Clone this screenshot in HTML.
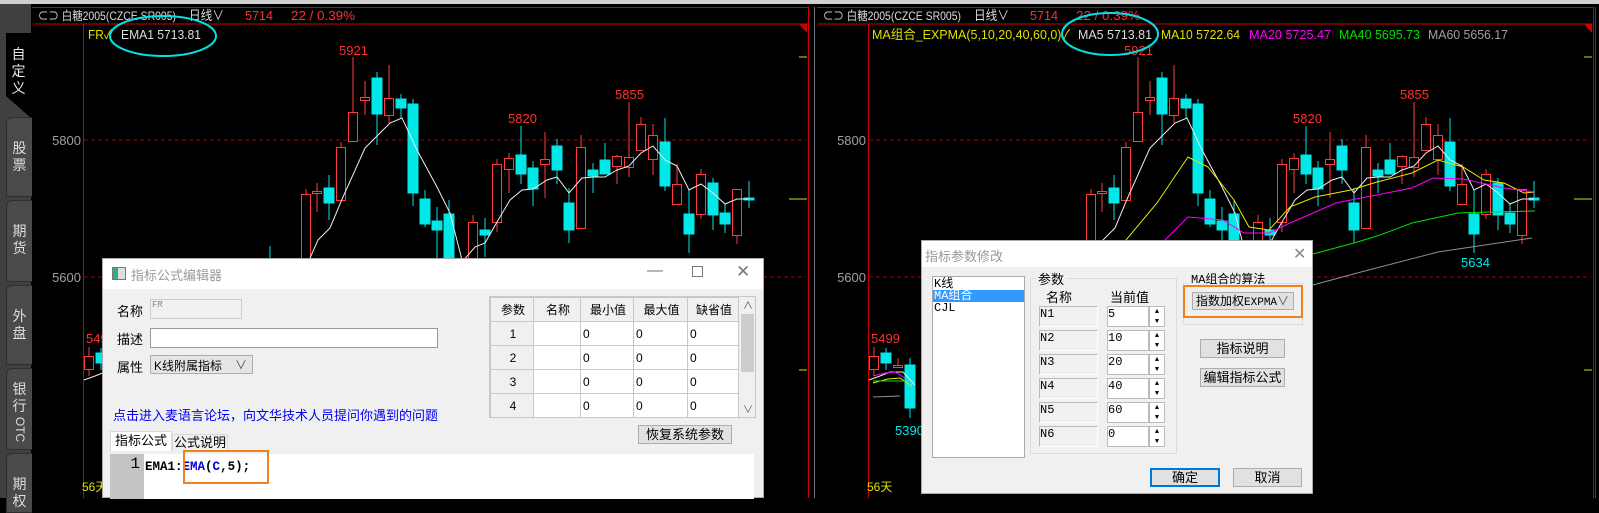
<!DOCTYPE html>
<html><head><meta charset="utf-8">
<style>
*{margin:0;padding:0;box-sizing:border-box}
body{width:1599px;height:498px;background:#000;position:relative;overflow:hidden;font-family:"Liberation Sans","Noto Sans CJK SC",sans-serif}
.a{position:absolute}
.tab{position:absolute;left:6px;width:26px;background:#4a4a4a;border:1px solid #2e2e2e;border-right:none;border-radius:6px 0 0 0;color:#ddd;font-size:14px;line-height:17px;text-align:center;padding-top:22px}
.dlg{position:absolute;background:#f0f0f0;font-size:13px;color:#000}
.inp{position:absolute;border:1px solid #999;background:#fff}
.btn{position:absolute;background:#e1e1e1;border:1px solid #adadad;text-align:center;font-size:13px;line-height:17px}
table{border-collapse:collapse}
td{border:1px solid #c8c8c8;height:24px;font-size:12px;padding-left:2px}
.mono{font-family:"Liberation Mono","Noto Sans CJK SC",monospace}
</style></head><body>
<div class="a" style="left:0;top:0;width:1599px;height:4px;background:#d0d0d0"></div>
<div class="a" style="left:0;top:4px;width:31px;height:494px;background:#404040"></div>
<div class="tab" style="top:117px;height:80px">股<br>票</div>
<div class="tab" style="top:200px;height:82px">期<br>货</div>
<div class="tab" style="top:285px;height:80px">外<br>盘</div>
<div class="tab" style="top:368px;height:82px;padding-top:12px">银<br>行<br><span style="display:inline-block;transform:rotate(90deg);font-size:12px;margin-top:6px">OTC</span></div>
<div class="tab" style="top:453px;height:60px;padding-top:22px">期<br>权</div>
<svg class="a" style="left:0;top:0" width="32" height="130"><polygon points="6,33 31,33 31,118 6,96" fill="#000"/></svg>
<div class="a" style="left:6px;top:46px;width:25px;color:#e8e8e8;font-size:14px;line-height:17px;text-align:center">自<br>定<br>义</div>

<svg class="a" style="left:0;top:0" width="1599" height="498" font-family="Liberation Sans, Noto Sans CJK SC, sans-serif">
<defs>
<g id="ch">
 <line x1="33" y1="24" x2="808" y2="24" stroke="#d00000"/>
 <line x1="83.5" y1="24" x2="83.5" y2="498" stroke="#d00000"/>
 <line x1="84" y1="140" x2="806" y2="140" stroke="#a00000" stroke-dasharray="4,3"/>
 <line x1="84" y1="277" x2="806" y2="277" stroke="#a00000" stroke-dasharray="4,3"/>
 <line x1="799" y1="57" x2="807" y2="57" stroke="#e0e000"/>
 <line x1="789" y1="199" x2="807" y2="199" stroke="#e0e000"/>
 <line x1="799" y1="370" x2="807" y2="370" stroke="#e0e000"/>
 <polygon points="799,24 807,24 807,33" fill="#d00000"/>
 <line x1="808.5" y1="7" x2="808.5" y2="498" stroke="#d00000"/>
 <line x1="32" y1="7.5" x2="809" y2="7.5" stroke="#d00000"/>
 <text x="81" y="145" fill="#a0a0a0" font-size="13" text-anchor="end">5800</text>
 <text x="81" y="282" fill="#a0a0a0" font-size="13" text-anchor="end">5600</text>
 <text x="38" y="20" fill="#ddd" font-size="12" textLength="138" lengthAdjust="spacingAndGlyphs">⊂⊃ 白糖2005(CZCE SR005)</text>
 <text x="189" y="20" fill="#ddd" font-size="13" textLength="35" lengthAdjust="spacingAndGlyphs">日线∨</text>
 <text x="245" y="20" fill="#ff3030" font-size="13" textLength="28" lengthAdjust="spacingAndGlyphs">5714</text>
 <text x="291" y="20" fill="#ff3030" font-size="13" textLength="64" lengthAdjust="spacingAndGlyphs">22 / 0.39%</text>
 <text x="339" y="55" fill="#ff3030" font-size="13">5921</text>
 <text x="508" y="123" fill="#ff3030" font-size="13">5820</text>
 <text x="615" y="99" fill="#ff3030" font-size="13">5855</text>
 <text x="676" y="267" fill="#00e8e8" font-size="13">5634</text>
 <text x="86" y="343" fill="#ff3030" font-size="13">5499</text>
 <text x="110" y="435" fill="#00e8e8" font-size="13">5390</text>
 <text x="82" y="491" fill="#e0e000" font-size="12">56天</text>
 <g stroke="#00e8e8" fill="#00e8e8">
  <line x1="270" y1="246" x2="270" y2="262"/>
  <line x1="329" y1="175" x2="329" y2="220"/><rect x="324" y="188" width="10" height="15"/>
  <line x1="377" y1="72" x2="377" y2="145"/><rect x="372" y="78" width="10" height="36"/>
  <line x1="401" y1="94" x2="401" y2="118"/><rect x="396" y="99" width="10" height="9"/>
  <line x1="413" y1="99" x2="413" y2="206"/><rect x="408" y="104" width="10" height="89"/>
  <line x1="425" y1="190" x2="425" y2="227"/><rect x="420" y="199" width="10" height="25"/>
  <line x1="437" y1="207" x2="437" y2="270"/><rect x="432" y="221" width="10" height="9"/>
  <line x1="449" y1="200" x2="449" y2="300"/><rect x="444" y="214" width="10" height="80"/>
  <line x1="485" y1="218" x2="485" y2="257"/><rect x="480" y="230" width="10" height="5"/>
  <line x1="521" y1="126" x2="521" y2="184"/><rect x="516" y="155" width="10" height="19"/>
  <line x1="533" y1="161" x2="533" y2="206"/><rect x="528" y="168" width="10" height="21"/>
  <line x1="557" y1="139" x2="557" y2="184"/><rect x="552" y="146" width="10" height="24"/>
  <line x1="569" y1="188" x2="569" y2="243"/><rect x="564" y="203" width="10" height="27"/>
  <line x1="593" y1="163" x2="593" y2="193"/><rect x="588" y="170" width="10" height="6"/>
  <line x1="605" y1="143" x2="605" y2="174"/><rect x="600" y="160" width="10" height="14"/>
  <line x1="665" y1="118" x2="665" y2="191"/><rect x="660" y="142" width="10" height="44"/>
  <line x1="689" y1="190" x2="689" y2="253"/><rect x="684" y="214" width="10" height="20"/>
  <line x1="713" y1="178" x2="713" y2="230"/><rect x="708" y="183" width="10" height="32"/>
  <line x1="725" y1="204" x2="725" y2="233"/><rect x="720" y="213" width="10" height="11"/>
  <line x1="749" y1="181" x2="749" y2="208"/><rect x="744" y="198" width="10" height="2"/>
  <line x1="101" y1="348" x2="101" y2="370"/><rect x="96" y="353" width="10" height="10"/>
  <line x1="125" y1="358" x2="125" y2="418"/><rect x="120" y="365" width="10" height="43"/>
 </g>
 <g stroke="#ff3b3b" fill="#000">
  <line x1="306" y1="189" x2="306" y2="300"/><rect x="301.5" y="194.5" width="9" height="100"/>
  <line x1="317" y1="183" x2="317" y2="212"/><rect x="312.5" y="191.5" width="9" height="2"/>
  <line x1="341" y1="142" x2="341" y2="201"/><rect x="336.5" y="147.5" width="9" height="53"/>
  <line x1="353" y1="57" x2="353" y2="142"/><rect x="348.5" y="112.5" width="9" height="29"/>
  <line x1="365" y1="81" x2="365" y2="115"/><rect x="360.5" y="97.5" width="9" height="3"/>
  <line x1="389" y1="65" x2="389" y2="123"/><rect x="384.5" y="98.5" width="9" height="17"/>
  <line x1="473" y1="215" x2="473" y2="300"/><rect x="468.5" y="222.5" width="9" height="80"/>
  <line x1="497" y1="159" x2="497" y2="232"/><rect x="492.5" y="164.5" width="9" height="58"/>
  <line x1="509" y1="153" x2="509" y2="193"/><rect x="504.5" y="158.5" width="9" height="11"/>
  <line x1="545" y1="132" x2="545" y2="198"/><rect x="540.5" y="159.5" width="9" height="5"/>
  <line x1="581" y1="135" x2="581" y2="229"/><rect x="576.5" y="147.5" width="9" height="81"/>
  <line x1="617" y1="155" x2="617" y2="184"/><rect x="612.5" y="156.5" width="9" height="10"/>
  <line x1="629" y1="102" x2="629" y2="177"/><rect x="624.5" y="157.5" width="9" height="10"/>
  <line x1="641" y1="117" x2="641" y2="151"/><rect x="636.5" y="124.5" width="9" height="26"/>
  <line x1="653" y1="124" x2="653" y2="175"/><rect x="648.5" y="135.5" width="9" height="24"/>
  <line x1="677" y1="164" x2="677" y2="205"/><rect x="672.5" y="184.5" width="9" height="20"/>
  <line x1="701" y1="169" x2="701" y2="219"/><rect x="696.5" y="174.5" width="9" height="40"/>
  <line x1="737" y1="189" x2="737" y2="244"/><rect x="732.5" y="189.5" width="9" height="46"/>
  <line x1="89" y1="347" x2="89" y2="376"/><rect x="84.5" y="356.5" width="9" height="13"/>
  <line x1="113" y1="358" x2="113" y2="368"/><rect x="108.5" y="365.5" width="9" height="2"/>
 </g>
 <polyline fill="none" stroke="#eee" points="300,275 310,258 318,240 330,228 343,197 365,148 390,123 402,118 417,150 437,187 450,213 462,260 470,275"/>
 <polyline fill="none" stroke="#eee" points="462,262 475,247 485,243 497,222 510,200 522,190 533,189 547,180 557,177 569,193 582,178 593,177 605,177 617,170 629,166 641,153 653,146 665,160 677,166 689,190 701,184 713,193 725,204 737,199 749,199"/>
 <polyline fill="none" stroke="#eee" points="84,380 95,376 105,372 118,372 130,385"/>
</g>
</defs>
<use href="#ch"/>
<use href="#ch" transform="translate(785,0)"/>
<line x1="1595.5" y1="7" x2="1595.5" y2="498" stroke="#d00000"/>
<line x1="814.5" y1="7" x2="814.5" y2="498" stroke="#777"/>
<polyline fill="none" stroke="#e8e800" points="1120,250 1126,240 1157,203 1188,157 1208,167 1234,200 1249,227 1269,230 1290,207 1315,197 1351,190 1377,182 1412,173 1438,160 1463,167 1484,180 1504,183 1524,193 1535,192"/>
<polyline fill="none" stroke="#ff00ff" points="1160,250 1165,240 1188,217 1223,220 1244,233 1269,233 1290,223 1336,203 1361,198 1412,188 1433,178 1463,179 1504,188 1535,192"/>
<polyline fill="none" stroke="#00e000" points="1313,254 1354,243 1380,235 1412,223 1458,213 1489,212 1535,211"/>
<polyline fill="none" stroke="#909090" points="1313,285 1361,272 1438,252 1532,238"/>
<polyline fill="none" stroke="#ff00ff" points="873,376 885,373 895,372 905,378"/>
<polyline fill="none" stroke="#e8e800" points="873,383 888,379 900,378 912,386"/>
<polyline fill="none" stroke="#00e000" points="873,381 905,381"/>
<polyline fill="none" stroke="#909090" points="873,397 900,396"/>
<text x="88" y="39" fill="#e0e000" font-size="13" textLength="24" lengthAdjust="spacingAndGlyphs">FR✓</text>
<text x="121" y="39" fill="#ddd" font-size="13" textLength="80" lengthAdjust="spacingAndGlyphs">EMA1 5713.81</text>
<ellipse cx="163" cy="36" rx="53" ry="20" fill="none" stroke="#00e0e8" stroke-width="2"/>
<text x="872" y="39" fill="#e0e000" font-size="13" textLength="198" lengthAdjust="spacingAndGlyphs">MA组合_EXPMA(5,10,20,40,60,0)✓</text>
<text x="1078" y="39" fill="#ddd" font-size="13" textLength="74" lengthAdjust="spacingAndGlyphs">MA5 5713.81</text>
<text x="1161" y="39" fill="#e0e000" font-size="13" textLength="79" lengthAdjust="spacingAndGlyphs">MA10 5722.64</text>
<text x="1249" y="39" fill="#ff00ff" font-size="13" textLength="82" lengthAdjust="spacingAndGlyphs">MA20 5725.47</text>
<text x="1339" y="39" fill="#00e000" font-size="13" textLength="81" lengthAdjust="spacingAndGlyphs">MA40 5695.73</text>
<text x="1428" y="39" fill="#a0a0a0" font-size="13" textLength="80" lengthAdjust="spacingAndGlyphs">MA60 5656.17</text>
<ellipse cx="1110" cy="34" rx="48" ry="21" fill="none" stroke="#00e0e8" stroke-width="2"/>
</svg>

<div class="dlg" style="left:102px;top:258px;width:662px;height:240px;border:1px solid #aaa">
 <div class="a" style="left:0;top:0;width:660px;height:30px;background:#fff"></div>
 <div class="a" style="left:9px;top:8px;width:14px;height:13px;border:1px solid #777;background:linear-gradient(90deg,#3a8 0 40%,#ddd 40%)"></div>
 <div class="a" style="left:28px;top:6px;color:#999;font-size:13px">指标公式编辑器</div>
 <div class="a" style="left:544px;top:3px;color:#777;font-size:16px">—</div>
 <div class="a" style="left:589px;top:7px;width:11px;height:11px;border:1px solid #777"></div>
 <div class="a" style="left:633px;top:3px;color:#777;font-size:17px">✕</div>
 <div class="a" style="left:14px;top:42px">名称</div>
 <div class="inp mono" style="left:47px;top:40px;width:92px;height:20px;background:#f0f0f0;border-color:#ccc;font-size:9px;color:#888;padding-left:1px">FR</div>
 <div class="a" style="left:14px;top:70px">描述</div>
 <div class="inp" style="left:47px;top:69px;width:288px;height:20px"></div>
 <div class="a" style="left:14px;top:98px">属性</div>
 <div class="inp" style="left:47px;top:96px;width:103px;height:19px;background:#e5e5e5;border-color:#adadad;font-size:12px;padding:1px 3px">K线附属指标<span style="position:absolute;right:5px;top:0;color:#555">∨</span></div>
 <div class="a" style="left:10px;top:146px;color:#0000ee;font-size:13px">点击进入麦语言论坛，向文华技术人员提问你遇到的问题</div>
 <div class="a" style="left:386px;top:37px;width:267px;height:122px;background:#fff;border:1px solid #c8c8c8;overflow:hidden">
  <table style="width:249px">
   <tr style="background:#f0f0f0;text-align:center"><td style="width:43px">参数</td><td style="width:47px">名称</td><td style="width:53px">最小值</td><td style="width:54px">最大值</td><td>缺省值</td></tr>
   <tr><td style="background:#f0f0f0;text-align:center">1</td><td></td><td>0</td><td>0</td><td>0</td></tr>
   <tr><td style="background:#f0f0f0;text-align:center">2</td><td></td><td>0</td><td>0</td><td>0</td></tr>
   <tr><td style="background:#f0f0f0;text-align:center">3</td><td></td><td>0</td><td>0</td><td>0</td></tr>
   <tr><td style="background:#f0f0f0;text-align:center">4</td><td></td><td>0</td><td>0</td><td>0</td></tr>
  </table>
  <div class="a" style="left:249px;top:0;width:17px;height:120px;background:#f0f0f0"><div style="margin:17px 2px 0;height:58px;background:#cdcdcd"></div><div class="a" style="left:4px;top:0;font-size:10px;color:#555">∧</div><div class="a" style="left:4px;top:104px;font-size:10px;color:#555">∨</div></div>
 </div>
 <div class="btn" style="left:535px;top:166px;width:94px;height:19px">恢复系统参数</div>
 <div class="a" style="left:7px;top:172px;width:62px;height:20px;background:#fff;border:1px solid #d9d9d9;border-bottom:none;text-align:center;font-size:13px;line-height:18px">指标公式</div>
 <div class="a" style="left:69px;top:175px;width:56px;height:17px;border:1px solid #d9d9d9;border-bottom:none;text-align:center;font-size:13px;line-height:16px">公式说明</div>
 <div class="a" style="left:7px;top:195px;width:644px;height:45px;background:#fff"></div>
 <div class="a mono" style="left:7px;top:195px;width:34px;height:45px;background:#c4c4c4;text-align:right;padding-right:4px;font-size:16px;line-height:20px">1</div>
 <div class="a" style="left:42px;top:201px;font-size:12.5px;font-weight:bold;font-family:'Liberation Mono',monospace">EMA1:<span style="color:#0000e0">EMA</span>(<span style="color:#0000e0">C</span>,5);</div>
 <div class="a" style="left:80px;top:191px;width:86px;height:34px;border:2px solid #f08020"></div>
</div>

<div class="dlg" style="left:921px;top:240px;width:392px;height:254px;border:1px solid #aaa">
 <div class="a" style="left:0;top:0;width:390px;height:26px;background:#fff"></div>
 <div class="a" style="left:3px;top:5px;color:#999;font-size:13px">指标参数修改</div>
 <div class="a" style="left:371px;top:3px;color:#888;font-size:16px">✕</div>
 <div class="a mono" style="left:10px;top:35px;width:93px;height:182px;background:#fff;border:1px solid #aaa;font-size:12px;line-height:12px;padding-top:1px">
  <div style="padding-left:1px">K线</div><div style="background:#3399ff;color:#fff;padding-left:1px">MA组合</div><div style="padding-left:1px">CJL</div>
 </div>
 <div class="a" style="left:108px;top:37px;width:147px;height:176px;border:1px solid #dcdcdc"></div>
 <div class="a" style="left:114px;top:28px;background:#f0f0f0;padding:0 2px;font-size:13px">参数</div>
 <div class="a" style="left:124px;top:46px;font-size:13px">名称</div>
 <div class="a" style="left:188px;top:46px;font-size:13px">当前值</div>
 <div class="a mono" style="left:117px;top:65px;width:130px;font-size:12px">
  <div style="position:relative;height:24px"><div class="a" style="left:0;top:0;width:59px;height:21px;border:1px solid #bbb;border-right-color:#fff;border-bottom-color:#fff">N1</div><div class="a" style="left:68px;top:0;width:42px;height:21px;background:#fff;border:1px solid #bbb">5</div><div class="a" style="left:110px;top:0;width:16px;height:21px;border:1px solid #bbb;font-size:7px;line-height:10px;text-align:center;background:#fff">▲<br>▼</div></div>
  <div style="position:relative;height:24px"><div class="a" style="left:0;top:0;width:59px;height:21px;border:1px solid #bbb;border-right-color:#fff;border-bottom-color:#fff">N2</div><div class="a" style="left:68px;top:0;width:42px;height:21px;background:#fff;border:1px solid #bbb">10</div><div class="a" style="left:110px;top:0;width:16px;height:21px;border:1px solid #bbb;font-size:7px;line-height:10px;text-align:center;background:#fff">▲<br>▼</div></div>
  <div style="position:relative;height:24px"><div class="a" style="left:0;top:0;width:59px;height:21px;border:1px solid #bbb;border-right-color:#fff;border-bottom-color:#fff">N3</div><div class="a" style="left:68px;top:0;width:42px;height:21px;background:#fff;border:1px solid #bbb">20</div><div class="a" style="left:110px;top:0;width:16px;height:21px;border:1px solid #bbb;font-size:7px;line-height:10px;text-align:center;background:#fff">▲<br>▼</div></div>
  <div style="position:relative;height:24px"><div class="a" style="left:0;top:0;width:59px;height:21px;border:1px solid #bbb;border-right-color:#fff;border-bottom-color:#fff">N4</div><div class="a" style="left:68px;top:0;width:42px;height:21px;background:#fff;border:1px solid #bbb">40</div><div class="a" style="left:110px;top:0;width:16px;height:21px;border:1px solid #bbb;font-size:7px;line-height:10px;text-align:center;background:#fff">▲<br>▼</div></div>
  <div style="position:relative;height:24px"><div class="a" style="left:0;top:0;width:59px;height:21px;border:1px solid #bbb;border-right-color:#fff;border-bottom-color:#fff">N5</div><div class="a" style="left:68px;top:0;width:42px;height:21px;background:#fff;border:1px solid #bbb">60</div><div class="a" style="left:110px;top:0;width:16px;height:21px;border:1px solid #bbb;font-size:7px;line-height:10px;text-align:center;background:#fff">▲<br>▼</div></div>
  <div style="position:relative;height:24px"><div class="a" style="left:0;top:0;width:59px;height:21px;border:1px solid #bbb;border-right-color:#fff;border-bottom-color:#fff">N6</div><div class="a" style="left:68px;top:0;width:42px;height:21px;background:#fff;border:1px solid #bbb">0</div><div class="a" style="left:110px;top:0;width:16px;height:21px;border:1px solid #bbb;font-size:7px;line-height:10px;text-align:center;background:#fff">▲<br>▼</div></div>
 </div>
 <div class="a" style="left:261px;top:42px;width:120px;height:42px;border:1px solid #dcdcdc"></div>
 <div class="a mono" style="left:267px;top:29px;background:#f0f0f0;padding:0 2px;font-size:12px">MA组合的算法</div>
 <div class="a" style="left:270px;top:51px;width:102px;height:18px;background:#e1e1e1;border:1px solid #adadad;font-size:12px;line-height:16px;padding-left:3px">指数加权<span class="mono" style="font-size:11px">EXPMA</span><span style="position:absolute;right:4px;color:#555">∨</span></div>
 <div class="a" style="left:261px;top:44px;width:120px;height:33px;border:2px solid #f08020"></div>
 <div class="btn" style="left:278px;top:98px;width:85px;height:19px">指标说明</div>
 <div class="btn" style="left:278px;top:127px;width:85px;height:19px">编辑指标公式</div>
 <div class="btn" style="left:228px;top:227px;width:70px;height:19px;border:2px solid #0078d7;line-height:15px">确定</div>
 <div class="btn" style="left:311px;top:227px;width:69px;height:19px">取消</div>
</div>
</body></html>
